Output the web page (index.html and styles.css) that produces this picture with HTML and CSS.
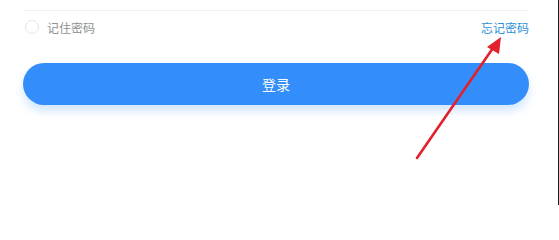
FILE: index.html
```html
<!DOCTYPE html>
<html lang="zh">
<head>
<meta charset="utf-8">
<link rel="stylesheet" href="styles.css">
</head>
<body>
<div class="page">
  <div class="form">
    <div class="divider"></div>
    <div class="options">
      <label class="remember"><span class="radio"></span><span class="remember-text">记住密码</span></label>
      <a class="forgot">忘记密码</a>
    </div>
    <button class="login">登录</button>
  </div>
  <svg class="arrow" width="559" height="205" viewBox="0 0 559 205">
    <line x1="417" y1="158" x2="493" y2="48" stroke="#e3202b" stroke-width="2.6" stroke-linecap="round"/>
    <polygon points="501,37 487,47 499,54" fill="#e3202b"/>
  </svg>
</div>
</body>
</html>
```
FILE: styles.css
```css
html, body {
  margin: 0;
  padding: 0;
  background: #ffffff;
}
.page {
  position: relative;
  width: 558px;
  height: 205px;
  border-right: 1px solid #1a1a1a;
  overflow: hidden;
  font-family: "Noto Sans CJK SC", "Noto Sans", sans-serif;
}
.form {
  padding: 10px 29px 0 23px;
  display: flex;
  flex-direction: column;
}
.divider {
  height: 1px;
  background: #f1f1f1;
  margin-left: 1px;
}
.options {
  display: flex;
  justify-content: space-between;
  align-items: center;
  height: 32px;
  padding-left: 2px;
}
.remember {
  display: flex;
  align-items: center;
  gap: 8px;
}
.radio {
  width: 14px;
  height: 14px;
  border: 1px solid #e4e4e4;
  border-radius: 50%;
  box-sizing: border-box;
}
.remember-text {
  font-size: 12px;
  color: #909090;
}
.forgot {
  font-size: 12px;
  color: #2e8fd8;
  margin-right: 0;
}
.login {
  margin-top: 20px;
  height: 42px;
  border: none;
  border-radius: 21px;
  background: #338dfb;
  color: #ffffff;
  font-family: "Noto Sans CJK SC", "Noto Sans", sans-serif;
  font-size: 14px;
  box-shadow: 0 6px 10px rgba(51, 141, 251, 0.22);
  padding: 0;
}
.arrow {
  position: absolute;
  left: 0;
  top: 0;
  pointer-events: none;
}
```
